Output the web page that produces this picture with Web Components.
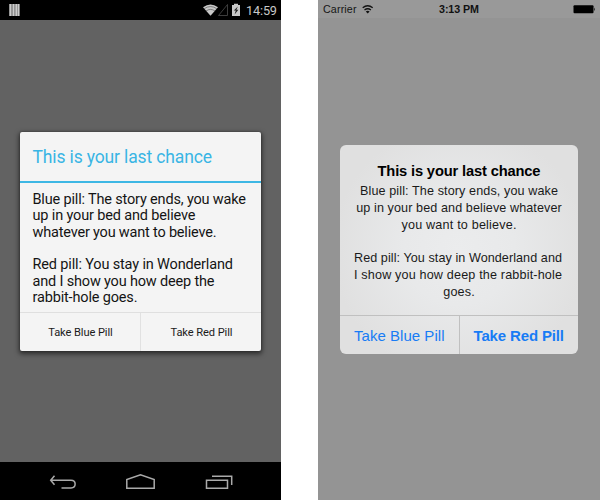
<!DOCTYPE html>
<html lang="en">
<head>
<meta charset="utf-8">
<title>Alert dialogs</title>
<style>
html,body{margin:0;height:500px;overflow:hidden;background:#fff}
</style>
</head>
<body>
<dialog-showcase></dialog-showcase>
<script>
const define = (name, html, extra) => customElements.define(name, class extends HTMLElement {
  constructor() {
    super();
    this.attachShadow({mode: 'open'}).innerHTML = html;
  }
  connectedCallback() { if (extra) extra(this); }
});

/* One line of text whose tracking is set so that it spans the given width. */
define('text-line', `<style>
:host{display:block;white-space:pre;height:var(--line,16.4px);line-height:var(--line,16.4px)}
span{display:inline-block}
</style><span><slot></slot></span>`, el => {
  const want = parseFloat(el.getAttribute('span'));
  if (!want) return;
  const s = el.shadowRoot.querySelector('span');
  const n = el.textContent.length;
  const have = s.getBoundingClientRect().width;
  s.style.letterSpacing = ((want - have) / (n - 1)) + 'px';
  s.style.marginRight = (-(want - have) / (n - 1)) + 'px';
});

define('android-status', `<style>
:host{display:flex;height:20px;background:#000;align-items:center;box-sizing:border-box;padding:0 4px 0 9px;font:12.700px/20px Roboto,sans-serif;color:#c8c8c8;--line:20px}
svg{display:block}
.icons{margin-left:auto;margin-right:5px}
text-line{margin-top:1px;width:31px}
</style>
<svg width="11" height="12" viewBox="0 0 11 12"><path fill="#777" d="M0 0h10.500v12H0z"/><path d="M1.500 0v12M4.500 0v12M7.300 0v12M9.600 0v12" stroke="#ccc" stroke-width="1.700"/></svg>
<svg class="icons" width="39" height="20" viewBox="202 0 39 20">
<path d="M203 7.300Q210.500 1.600 218 7.300L210.500 15.800Z" fill="#c8c8c8"/>
<path d="M204.200 8.700Q210.500 4.400 216.800 8.700M206 11Q210.500 7.800 215 11" fill="none" stroke="#444" stroke-width=".6"/>
<path d="M227.500 4.500V15.500H218.500Z" fill="none" stroke="#444" stroke-width=".9"/>
<path d="M232 5h2V3.800h4V5h2v11h-8z" fill="#c8c8c8"/>
<path d="M237.800 6.500l-4 4h2l-1.200 4 3.800-4.700h-2z" fill="#222"/>
</svg>
<text-line span="31">14:59</text-line>`);

define('android-button', `<style>
:host{display:flex;flex:1;justify-content:center;padding-left:1px;font-size:11.100px;--line:39px;color:#1b1b1b}
</style><slot></slot>`);

define('android-dialog', `<style>
:host{display:flex;flex-direction:column;width:241px;height:219px;background:#f4f4f4;border-radius:2px;box-shadow:0 2px 5px 1px rgba(0,0,0,.55),0 0 2px rgba(0,0,0,.35);font:14.500px Roboto,sans-serif;color:#141414;overflow:hidden}
header{height:51px;box-sizing:border-box;padding:12.400px 12.500px 0;border-bottom:2px solid #3db7e4;color:#39b5e4;font-size:17.500px;--line:26px}
main{flex:1;padding:9.400px 12.500px 0}
footer{height:39px;display:flex;border-top:1px solid #dfdfdf;box-sizing:border-box}
</style>
<header><slot name="title"></slot></header><main><slot></slot></main><footer><slot name="actions"></slot></footer>`);

define('android-nav', `<style>
:host{display:block;height:38px;background:#000}svg{display:block}
</style><svg width="281" height="38" viewBox="0 462 281 38" fill="none" stroke="#aaa" stroke-width="1.500">
<path d="M54.500 475.800L50.700 480.200L54.500 484.700M51 480.200H71C76.500 480.200 76.500 488 71 488H61.500"/>
<path d="M126.800 488.200V479.500L140.500 474.800L154.200 479.500V488.200Z"/>
<path d="M206.500 480.200H227.500V488.200H206.500ZM212 476.300H231.700V485"/>
</svg>`);

define('android-phone', `<style>
:host{display:flex;flex-direction:column;width:281px;height:500px;background:#626262}
.stage{flex:1;display:flex;justify-content:center;align-items:flex-start;padding-top:111.500px;box-sizing:border-box}
.action{display:flex;flex:1}
.action+.action{border-left:1px solid #e1e1e1}
</style>
<android-status></android-status>
<div class="stage"><android-dialog>
<text-line slot="title" span="179.500">This is your last chance</text-line>
<text-line span="213.500">Blue pill: The story ends, you wake</text-line>
<text-line span="163">up in your bed and believe</text-line>
<text-line span="184">whatever you want to believe.</text-line>
<text-line> </text-line>
<text-line span="200.500">Red pill: You stay in Wonderland</text-line>
<text-line span="182">and I show you how deep the</text-line>
<text-line span="105">rabbit-hole goes.</text-line>
<div slot="actions" class="action"><android-button><text-line span="64.500">Take Blue Pill</text-line></android-button></div>
<div slot="actions" class="action"><android-button><text-line span="62">Take Red Pill</text-line></android-button></div>
</android-dialog></div>
<android-nav></android-nav>`);

define('ios-status', `<style>
:host{display:grid;grid-template-columns:1fr auto 1fr;height:18px;background:#999;align-items:center;padding:0 5px;font:10.700px "Liberation Sans",Arial,sans-serif;color:#151515;--line:18px}
.left{display:flex;gap:5px;align-items:center}
.time{font-weight:bold;color:#111}
.battery{justify-self:end}
svg{display:block}
</style>
<div class="left"><text-line span="33.500">Carrier</text-line>
<svg width="12" height="18" viewBox="361 0 12 18"><path d="M361.700 7.800Q366.700 3.700 371.700 7.800M363.500 10Q366.700 7.500 369.900 10" fill="none" stroke="#111" stroke-width="1.300"/><path d="M364.800 11.500Q366.700 10.100 368.600 11.500L366.700 13.500Z" fill="#111"/></svg></div>
<text-line class="time" span="40">3:13 PM</text-line>
<svg class="battery" width="22" height="18" viewBox="573 0 22 18"><rect x="573.500" y="5.200" width="20" height="8" rx="1" fill="#000"/><path d="M594 7.500q1.300 1.700 0 3.500z" fill="#111"/></svg>`);

define('ios-button', `<style>
:host{display:flex;flex:1;justify-content:center;color:#187cf5;font-size:15px;--line:39px}
:host([primary]){font-weight:bold}
</style><slot></slot>`);

define('ios-alert', `<style>
:host{display:flex;flex-direction:column;width:238px;height:209px;border-radius:6px;overflow:hidden;background:radial-gradient(circle at 50% 50%,#ebeced 0,#e8e9ea 35%,#e0e0e0 80%);font:12.600px "Liberation Sans",Arial,sans-serif;color:#1a1a1a;text-align:center;--line:16.800px}
header{padding-top:16px;font-size:14.700px;font-weight:bold;color:#000;--line:20px}
main{flex:1;padding-top:2px}
footer{height:39px;box-sizing:border-box;display:flex;border-top:1px solid #c0c0c0}
</style>
<header><slot name="title"></slot></header><main><slot></slot></main><footer><slot name="actions"></slot></footer>`);

define('ios-phone', `<style>
:host{display:flex;flex-direction:column;width:282px;height:500px;background:#949494}
.stage{flex:1;display:flex;justify-content:center;align-items:flex-start;padding-top:127.300px;box-sizing:border-box}
.action{display:flex;flex:1}
.action+.action{border-left:1px solid #c0c0c0}
</style>
<ios-status></ios-status>
<div class="stage"><ios-alert>
<text-line slot="title" span="163">This is your last chance</text-line>
<text-line span="198">Blue pill: The story ends, you wake</text-line>
<text-line span="205.500">up in your bed and believe whatever</text-line>
<text-line span="115">you want to believe.</text-line>
<text-line> </text-line>
<text-line span="208" style="margin-left:-2px">Red pill: You stay in Wonderland and</text-line>
<text-line span="208" style="margin-left:-2px">I show you how deep the rabbit-hole</text-line>
<text-line span="31.500">goes.</text-line>
<div slot="actions" class="action"><ios-button><text-line span="90.500">Take Blue Pill</text-line></ios-button></div>
<div slot="actions" class="action"><ios-button primary><text-line span="90.500">Take Red Pill</text-line></ios-button></div>
</ios-alert></div>`);

define('dialog-showcase', `<style>
:host{display:flex;justify-content:space-between;width:600px;height:500px}
</style><android-phone></android-phone><ios-phone></ios-phone>`);
</script>
</body>
</html>
